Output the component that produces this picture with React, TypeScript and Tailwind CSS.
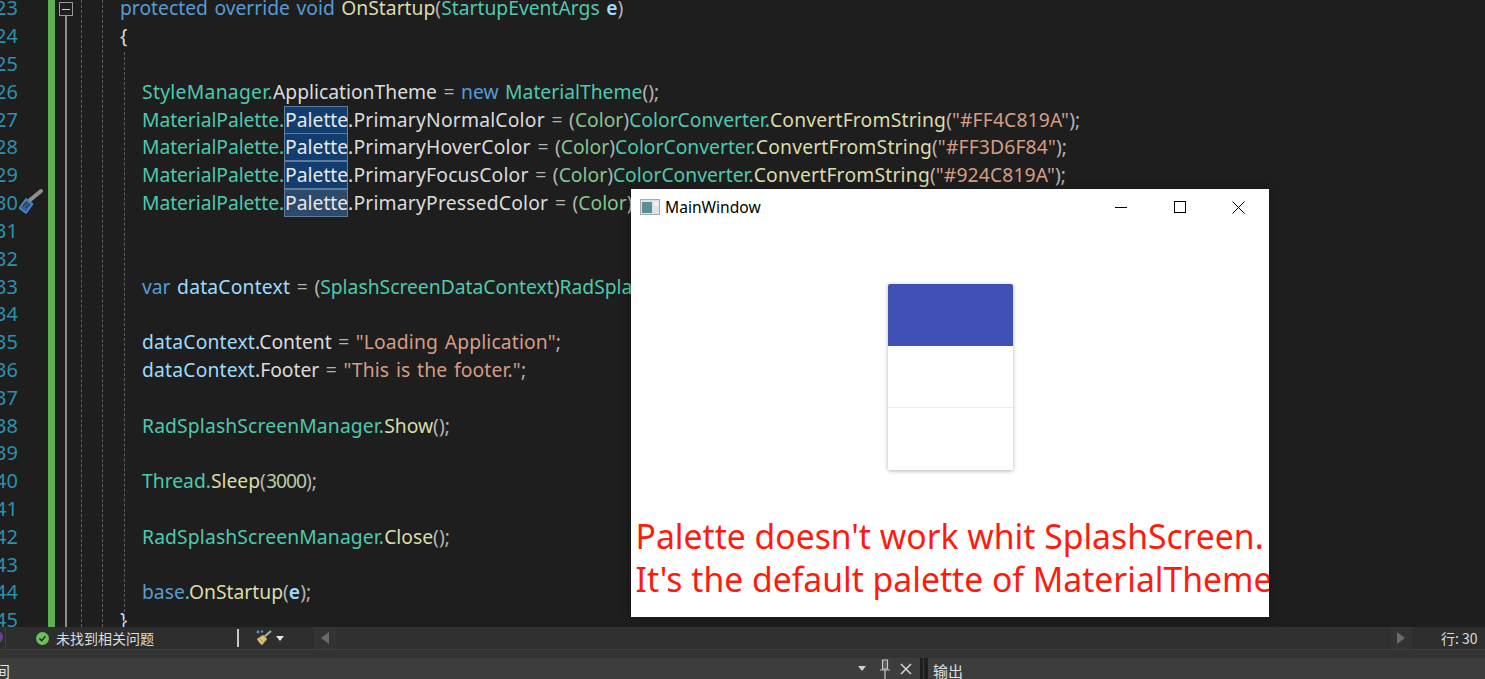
const KW = "text-[#569cd6]";
const TY = "text-[#4ec9b0]";
const TW = "text-[#4ec9b0] tracking-[0.14px]";
const TN = "text-[#4ec9b0] tracking-[-0.07px]";
const ST2 = "text-[#4ec9b0] tracking-[0.3px]";
const CL = "text-[#86c691]";
const ME = "text-[#dcdcaa]";
const MW = "text-[#dcdcaa] tracking-[0.2px]";
const ST = "text-[#d69d85] tracking-[0.15px]";
const VA = "text-[#9cdcfe] tracking-[0.2px]";
const VB = "text-[#9cdcfe] font-semibold";
const NU = "text-[#b5cea8] tracking-[-1px]";
const PL = "text-[#dcdcdc]";
const PW = "text-[#dcdcdc] tracking-[0.2px]";
const OP = "text-[#b4b4b4]";

type Tok = [string, string];

const Pal = ({ dim }: { dim?: boolean }) => (
  <span
    className={`inline-block w-[64px] h-[28px] border border-[#5f7c9c] leading-[26px] text-[#e8e8e8] ${
      dim ? "bg-[#2d4a6b]" : "bg-[#113d6f]"
    }`}
  >
    Palette
  </span>
);

const paletteLine = (prop: string, hex: string, dim?: boolean) => (
  <>
    <span className={TN}>MaterialPalette.</span>
    <Pal dim={dim} />
    <span className={PW}>.{prop} </span>
    <span className={OP}>= (</span>
    <span className={CL}>Color</span>
    <span className={OP}>)</span>
    <span className={TY}>ColorConverter.</span>
    <span className={MW}>ConvertFromString</span>
    <span className={OP}>(</span>
    <span className={ST}>"{hex}"</span>
    <span className={OP}>);</span>
  </>
);

const toks = (list: Tok[]) =>
  list.map(([c, t], i) => (
    <span key={i} className={c}>
      {t}
    </span>
  ));

const lines: { n: number; indent: number; body?: React.ReactNode }[] = [
  {
    n: 23,
    indent: 0,
    body: toks([
      [KW, "protected override void "],
      [ME, "OnStartup"],
      [OP, "("],
      [TY, "StartupEventArgs "],
      [VB, "e"],
      [OP, ")"],
    ]),
  },
  { n: 24, indent: 0, body: toks([[PL, "{"]]) },
  { n: 25, indent: 1 },
  {
    n: 26,
    indent: 1,
    body: toks([
      [ST2, "StyleManager."],
      [PL, "ApplicationTheme "],
      [OP, "= "],
      [KW, "new "],
      [TY, "MaterialTheme"],
      [OP, "();"],
    ]),
  },
  { n: 27, indent: 1, body: paletteLine("PrimaryNormalColor", "#FF4C819A") },
  { n: 28, indent: 1, body: paletteLine("PrimaryHoverColor", "#FF3D6F84") },
  { n: 29, indent: 1, body: paletteLine("PrimaryFocusColor", "#924C819A") },
  { n: 30, indent: 1, body: paletteLine("PrimaryPressedColor", "#FF4C819A", true) },
  { n: 31, indent: 1 },
  { n: 32, indent: 1 },
  {
    n: 33,
    indent: 1,
    body: toks([
      [KW, "var "],
      [VA, "dataContext "],
      [OP, "= ("],
      [TY, "SplashScreenDataContext"],
      [OP, ")"],
      [TY, "RadSplashScreenManager"],
    ]),
  },
  { n: 34, indent: 1 },
  {
    n: 35,
    indent: 1,
    body: toks([
      [VA, "dataContext"],
      [PL, ".Content "],
      [OP, "= "],
      [ST, '"Loading Application"'],
      [OP, ";"],
    ]),
  },
  {
    n: 36,
    indent: 1,
    body: toks([
      [VA, "dataContext"],
      [PL, ".Footer "],
      [OP, "= "],
      [ST, '"This is the footer."'],
      [OP, ";"],
    ]),
  },
  { n: 37, indent: 1 },
  {
    n: 38,
    indent: 1,
    body: toks([
      [TW, "RadSplashScreenManager."],
      [ME, "Show"],
      [OP, "();"],
    ]),
  },
  { n: 39, indent: 1 },
  {
    n: 40,
    indent: 1,
    body: toks([
      [TY, "Thread."],
      [ME, "Sleep"],
      [OP, "("],
      [NU, "3000"],
      [OP, ");"],
    ]),
  },
  { n: 41, indent: 1 },
  {
    n: 42,
    indent: 1,
    body: toks([
      [TW, "RadSplashScreenManager."],
      [ME, "Close"],
      [OP, "();"],
    ]),
  },
  { n: 43, indent: 1 },
  {
    n: 44,
    indent: 1,
    body: toks([
      [KW, "base"],
      [TY, "."],
      [ME, "OnStartup"],
      [OP, "("],
      [VB, "e"],
      [OP, ");"],
    ]),
  },
  { n: 45, indent: 0, body: toks([[PL, "}"]]) },
];

const Screwdriver = () => (
  <svg width="26" height="28" viewBox="0 0 26 28" className="absolute left-[19px] top-[188px]">
    <path d="M11 12 L22 3" stroke="#8f8f8f" strokeWidth="4" strokeLinecap="round" />
    <path d="M0.5 20 L7 11 L13.5 16 L7 25 Z" fill="#2f6199" stroke="#4a86c8" strokeWidth="1.6" strokeLinejoin="round" />
    <path d="M4 18 L8 14 M6.5 20 L10.5 16" stroke="#1e1e1e" strokeWidth="1" />
  </svg>
);

const Broom = () => (
  <svg width="20" height="18" viewBox="0 0 20 18">
    <path d="M16 2 L9 8" stroke="#a8a8a8" strokeWidth="2.2" />
    <path d="M2 10 L8 6 L12 10 L7 16 Q4 14 2 10 Z" fill="#d8c27f" stroke="#a28c52" strokeWidth="0.7" />
    <path d="M5 10 L8 13" stroke="#8a7a50" strokeWidth="0.8" />
    <circle cx="3" cy="3" r="1.4" fill="#5b8fd6" />
    <circle cx="7" cy="2.5" r="1.2" fill="#5b8fd6" />
  </svg>
);

export default function App() {
  return (
    <div className="relative w-[1485px] h-[679px] overflow-hidden bg-[#1e1e1e] font-['Noto_Sans','Liberation_Sans',sans-serif]">
      {/* editor */}
      <div className="relative flex h-[627px] overflow-hidden bg-[#1e1e1e]">
        <div className="w-[18px] shrink-0 -mt-[5.6px] text-[20px] text-[#2b91af]">
          {lines.map((l) => (
            <div key={l.n} className="h-[27.82px] leading-[27.82px] flex justify-end overflow-hidden whitespace-nowrap">
              {l.n}
            </div>
          ))}
        </div>
        <div className="ml-[30px] w-[7px] shrink-0 bg-[#5cb050]" />
        <div className="w-[65px] shrink-0" />
        <div className="-mt-[5.6px] text-[19.3px] [word-spacing:1.5px] whitespace-nowrap">
          {lines.map((l) => (
            <div key={l.n} className={`h-[27.82px] leading-[27.82px] ${l.indent ? "pl-[22px]" : "pl-0"}`}>
              {l.body}
            </div>
          ))}
        </div>

        {/* fold margin and indent guides */}
        <div className="absolute left-[59px] top-[2px] w-[14px] h-[14px] border border-[#9a9a9a] flex items-center justify-center bg-[#1e1e1e]">
          <div className="w-[8px] h-px bg-[#d0d0d0]" />
        </div>
        <div className="absolute left-[65px] top-[16px] bottom-0 w-[2px] bg-[#8c8c8c]" />
        <div className="absolute left-[81px] top-0 bottom-0 border-l border-dashed border-[#5f5f5f]" />
        <div className="absolute left-[102px] top-0 bottom-0 border-l border-dashed border-[#5f5f5f]" />
        <div className="absolute left-[124px] top-[52px] bottom-0 border-l border-dashed border-[#5f5f5f]" />
        <Screwdriver />
      </div>

      {/* status strip */}
      <div className="flex items-center h-[23px] bg-[#2d2d2d] border-b border-[#3f3f3f] text-[#dcdcdc]">
        <div className="w-[6px] h-full shrink-0 border-r border-[#3f3f3f] overflow-hidden">
          <div className="-ml-[9px] mt-[4px] w-[12px] h-[12px] rounded-full bg-[#68428f]" />
        </div>
        <div className="w-[30px] shrink-0" />
        <div className="w-[13px] h-[13px] rounded-full bg-[#6cc05c] flex items-center justify-center">
          <svg width="9" height="9" viewBox="0 0 9 9">
            <path d="M1.5 4.5 L3.7 6.7 L7.5 2.2" stroke="#1e1e1e" strokeWidth="1.3" fill="none" />
          </svg>
        </div>
        <span className="ml-[7px] w-[181px] text-[14px] font-['Noto_Sans_CJK_SC',sans-serif]">未找到相关问题</span>
        <div className="w-[2px] h-[18px] bg-[#c8c8c8]" />
        <div className="ml-[16px]">
          <Broom />
        </div>
        <div className="ml-px w-0 h-0 border-x-[4px] border-x-transparent border-t-[5px] border-t-[#e4e4e4]" />
        <div className="ml-[30px] flex-1 h-full flex items-center bg-[#303030]">
          <div className="w-[22px] h-full bg-[#333333] flex items-center justify-center">
            <div className="w-0 h-0 border-y-[6px] border-y-transparent border-r-[8px] border-r-[#6a6a6a]" />
          </div>
          <div className="flex-1" />
          <div className="w-[22px] h-full bg-[#333333] flex items-center justify-center">
            <div className="w-0 h-0 border-y-[6px] border-y-transparent border-l-[8px] border-l-[#6a6a6a]" />
          </div>
        </div>
        <span className="w-[73px] pl-[29px] text-[14px] font-['Noto_Sans_CJK_SC',sans-serif]">行: 30</span>
      </div>

      {/* strip under the status bar */}
      <div className="h-[8px] bg-[#333333]" />

      {/* bottom panel headers */}
      <div className="flex h-[21px] bg-[#3d3d3d] text-[#e0e0e0] text-[15px] font-['Noto_Sans_CJK_SC',sans-serif]">
        <div className="w-[10px] overflow-hidden">
          <div className="-ml-[5px] leading-[26px]">间</div>
        </div>
        <div className="flex-1 flex items-center">
          <div className="ml-[848px] w-0 h-0 border-x-[4px] border-x-transparent border-t-[5px] border-t-[#d0d0d0]" />
          <svg width="10" height="21" viewBox="0 0 10 21" className="ml-[14px]">
            <path d="M2.5 2 H7.5 V11 H2.5 Z" fill="#5a5a5a" stroke="#c8c8c8" strokeWidth="1.2" />
            <path d="M0 12 H10 M5 12 V21" stroke="#c8c8c8" strokeWidth="1.2" />
          </svg>
          <svg width="12" height="12" viewBox="0 0 12 12" className="ml-[10px]">
            <path d="M1 1 L11 11 M11 1 L1 11" stroke="#d0d0d0" strokeWidth="1.6" />
          </svg>
        </div>
        <div className="w-[8px] flex gap-px mr-[5px]">
          <div className="w-[3px] bg-[#1e1e1e]" />
          <div className="w-[4px] bg-[#1e1e1e]" />
        </div>
        <div className="w-[552px] leading-[26px]">输出</div>
      </div>

      {/* floating app window */}
      <div className="absolute left-[631px] top-[189px] w-[638px] h-[428px] bg-white overflow-hidden flex flex-col items-center shadow-[0_0_10px_rgba(0,0,0,0.3)]">
        <div className="w-full h-[36px] shrink-0 flex items-center text-[15.6px] text-black">
          <svg width="20" height="16" viewBox="0 0 20 16" className="ml-[9px]">
            <rect x="0.5" y="0.5" width="19" height="15" fill="#dfe3e6" stroke="#a9a9a9" />
            <rect x="2" y="3" width="10" height="11" fill="#5b8f92" />
            <rect x="14" y="3" width="4" height="4" fill="#f4f4f4" />
          </svg>
          <span className="ml-[5px] pt-[2px] flex-1">MainWindow</span>
          <div className="w-[59px] flex justify-center">
            <div className="w-[12px] h-px bg-black" />
          </div>
          <div className="w-[59px] flex justify-center">
            <div className="w-[12px] h-[12px] border border-black" />
          </div>
          <div className="w-[59px] flex justify-center mr-px">
            <svg width="13" height="13" viewBox="0 0 13 13">
              <path d="M0.5 0.5 L12.5 12.5 M12.5 0.5 L0.5 12.5" stroke="black" strokeWidth="1" />
            </svg>
          </div>
        </div>

        <div className="mt-[59px] w-[125px] rounded-[2px] shadow-[0_1px_4px_rgba(0,0,0,0.3)] flex flex-col shrink-0">
          <div className="h-[62px] bg-[#3f51b5] rounded-t-[2px]" />
          <div className="h-[62px] bg-white border-b border-[#ececec]" />
          <div className="h-[62px] bg-white rounded-b-[2px]" />
        </div>

        <div className="mt-[45px] w-full pl-[4.5px] text-[33.7px] leading-[43px] text-[#ff1a0d] whitespace-nowrap">
          <div>Palette doesn't work whit SplashScreen.</div>
          <div>It's the default palette of MaterialTheme</div>
        </div>
      </div>
    </div>
  );
}
